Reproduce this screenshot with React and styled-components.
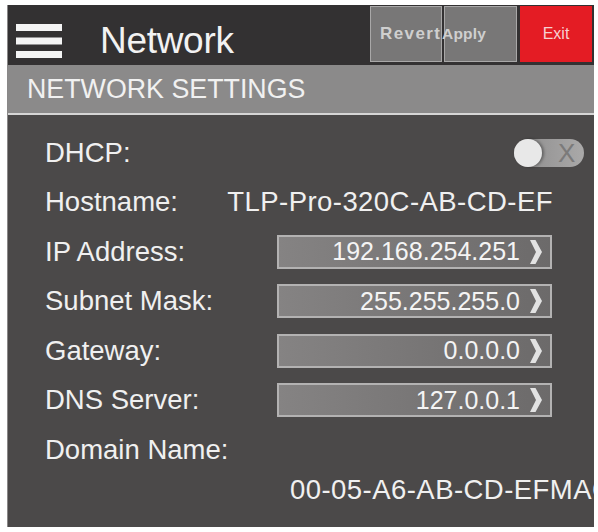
import styled, { createGlobalStyle } from "styled-components"

const GlobalStyle = createGlobalStyle`
    body {
        margin: 0;
        background: #fff;
        font-family: "Liberation Sans", Arial, sans-serif;
    }
`;

const Page = styled.div`
    padding: 5px 4px 0 7px;
`;

const Panel = styled.div`
    width: 587px;
    height: 522px;
    background-color: #4b4949;
    border-left: 1px solid #8a8888;
    box-sizing: border-box;
    overflow: hidden;
    display: flex;
    flex-direction: column;
`;

const Header = styled.div`
    height: 60px;
    flex-shrink: 0;
    background-color: #333132;
    display: flex;
    align-items: flex-start;
`;

const Brand = styled.div`
    display: flex;
    align-items: center;
    height: 48px;
    margin-top: 12px;
    padding-left: 8px;
`;

const Title = styled.span`
    margin-left: 38px;
    font-size: 37px;
    color: #f2f2f2;
    letter-spacing: -0.3px;
`;

const Actions = styled.div`
    margin-left: auto;
    margin-right: 2px;
    margin-top: 1px;
    display: flex;
`;

const ActionButton = styled.div`
    width: ${p => p.$w}px;
    height: 56px;
    margin-left: ${p => p.$gap}px;
    box-sizing: border-box;
    display: flex;
    align-items: center;
    justify-content: ${p => (p.$danger ? "center" : "flex-start")};
    padding-left: ${p => p.$pad}px;
    background-color: ${p => (p.$danger ? "#e41c24" : "#787777")};
    border: ${p => (p.$danger ? "none" : "1px solid #a9a8a8")};
    color: ${p => (p.$danger ? "#f6d0d0" : "#cfcfcf")};
    font-size: ${p => p.$size}px;
    font-weight: ${p => (p.$danger ? "normal" : "bold")};
    letter-spacing: ${p => p.$ls}px;
    white-space: nowrap;
`;

const SectionBar = styled.div`
    height: 48px;
    flex-shrink: 0;
    background-color: #8b8a8a;
    border-bottom: 2px solid #d6d6d6;
    display: flex;
    align-items: center;
    padding-left: 19px;
    font-size: 26.8px;
    color: #f1f1f1;
`;

const Body = styled.div`
    padding-top: 13px;
    display: flex;
    flex-direction: column;
`;

const Row = styled.div`
    height: ${p => p.$h || 49.5}px;
    display: flex;
    align-items: center;
    padding-left: 37px;
    padding-right: ${p => (p.$pr !== undefined ? p.$pr : 42)}px;
    font-size: 27.5px;
    color: #f0f0f0;
    white-space: nowrap;
`;

const Label = styled.span`
    flex-shrink: 0;
`;

const Value = styled.span`
    margin-left: ${p => p.$ml || "auto"};
    letter-spacing: 0.45px;
`;

const Field = styled.div`
    margin-left: auto;
    width: 275px;
    height: 34px;
    box-sizing: border-box;
    border: 2px solid #b3b2b2;
    background: linear-gradient(to right, #858383, #6c6a6a);
    display: flex;
    align-items: center;
    justify-content: flex-end;
    padding-right: 8px;
    font-size: 25px;
    color: #f4f4f4;
`;

const Chevron = styled.svg`
    margin-left: 10px;
    flex-shrink: 0;
`;

const Toggle = styled.div`
    margin-left: auto;
    width: 70px;
    height: 28px;
    border-radius: 14px;
    background: linear-gradient(to right, #8c8b8b, #aaa9a9);
    display: flex;
    align-items: center;
`;

const Knob = styled.div`
    width: 28px;
    height: 28px;
    border-radius: 50%;
    background-color: #e8e8e8;
    box-shadow: 2px 0 3px rgba(0, 0, 0, 0.35);
`;

const ToggleMark = styled.span`
    margin-left: 16px;
    font-size: 26px;
    color: #7b7a7a;
    line-height: 1;
`;

const Menu = () => (
    <svg width="46" height="34" viewBox="0 0 46 34">
        <rect x="0" y="0" width="46" height="7" fill="#f4f4f4" />
        <rect x="0" y="13.5" width="46" height="7" fill="#f4f4f4" />
        <rect x="0" y="27" width="46" height="7" fill="#f4f4f4" />
    </svg>
);

const Arrow = () => (
    <Chevron width="12" height="24" viewBox="0 0 12 24">
        <polygon points="0,0 5.5,0 12,12 5.5,24 0,24 6,12" fill="#e2e2e2" />
    </Chevron>
);

const fields = [
    ["IP Address:", "192.168.254.251"],
    ["Subnet Mask:", "255.255.255.0"],
    ["Gateway:", "0.0.0.0"],
    ["DNS Server:", "127.0.0.1"],
];

const App = () => {
    return (
        <Page>
            <GlobalStyle />
            <Panel>
                <Header>
                    <Brand>
                        <Menu />
                        <Title>Network</Title>
                    </Brand>
                    <Actions>
                        <ActionButton $w={72} $gap={0} $pad={9} $size={17} $ls={1.4}>Revert</ActionButton>
                        <ActionButton $w={73} $gap={2} $pad={0} $size={15.5} $ls={0.2}>
                            <span style={{ marginLeft: -3 }}>Apply</span>
                        </ActionButton>
                        <ActionButton $w={72} $gap={3} $pad={0} $size={16} $ls={0} $danger>Exit</ActionButton>
                    </Actions>
                </Header>
                <SectionBar>NETWORK SETTINGS</SectionBar>
                <Body>
                    <Row $pr={10}>
                        <Label>DHCP:</Label>
                        <Toggle>
                            <Knob />
                            <ToggleMark>X</ToggleMark>
                        </Toggle>
                    </Row>
                    <Row $pr={41}>
                        <Label>Hostname:</Label>
                        <Value>TLP-Pro-320C-AB-CD-EF</Value>
                    </Row>
                    {fields.map(([label, value]) => (
                        <Row key={label}>
                            <Label>{label}</Label>
                            <Field>
                                {value}
                                <Arrow />
                            </Field>
                        </Row>
                    ))}
                    <Row>
                        <Label>Domain Name:</Label>
                    </Row>
                    <Row $h={30} $pr={0}>
                        <Value $ml="245px">00-05-A6-AB-CD-EFMAC</Value>
                    </Row>
                </Body>
            </Panel>
        </Page>
    )
}

export default App
